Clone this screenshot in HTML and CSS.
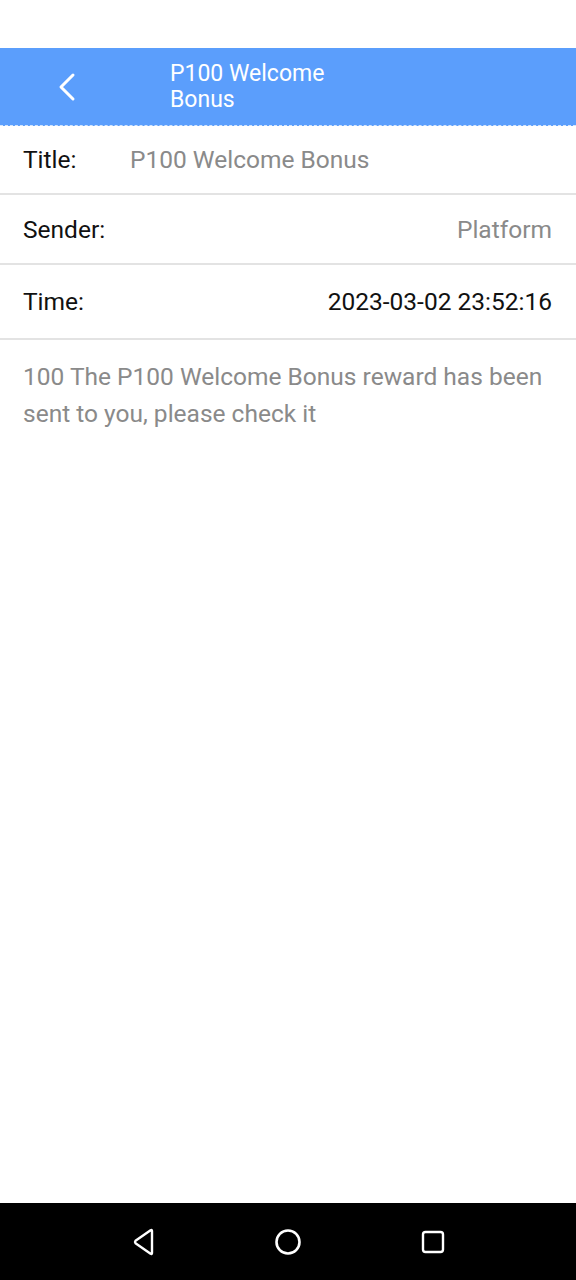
FILE: index.html
```html
<!DOCTYPE html>
<html lang="en">
<head>
    <meta charset="UTF-8">
    <meta name="viewport" content="width=device-width, initial-scale=1.0">
    <title>Message Detail</title>
    <link rel="stylesheet" href="styles.css">
</head>
<body>

<div class="screen">
    <div class="status-space"></div>

    <!-- Top bar -->
    <div class="topbar">
        <button class="back-btn" aria-label="Back">
            <svg width="22" height="32" viewBox="0 0 22 32">
                <path d="M17 4 L5 16 L17 28" fill="none" stroke="#fff" stroke-width="3" stroke-linecap="round" stroke-linejoin="round"/>
            </svg>
        </button>
        <div class="topbar-title">P100 Welcome Bonus</div>
    </div>

    <!-- Message info -->
    <div class="info-list">
        <div class="info-row">
            <span class="info-label title-label">Title:</span>
            <span class="info-value">P100 Welcome Bonus</span>
        </div>
        <div class="info-row right mid">
            <span class="info-label">Sender:</span>
            <span class="info-value">Platform</span>
        </div>
        <div class="info-row right tall">
            <span class="info-label">Time:</span>
            <span class="info-value dark">2023-03-02 23:52:16</span>
        </div>
    </div>

    <div class="message-body">
        100 The P100 Welcome Bonus reward has been sent to you, please check it
    </div>

    <!-- Android navigation bar -->
    <div class="navbar">
        <svg width="24" height="28" viewBox="0 0 24 28">
            <path d="M20 3 L20 25 Q20 26.5 18.6 25.7 L3.5 15.2 Q2.5 14 3.5 12.8 L18.6 2.3 Q20 1.5 20 3 Z" fill="none" stroke="#fff" stroke-width="2.4" stroke-linejoin="round"/>
        </svg>
        <svg width="28" height="28" viewBox="0 0 28 28">
            <circle cx="14" cy="14" r="11.5" fill="none" stroke="#fff" stroke-width="2.6"/>
        </svg>
        <svg width="26" height="26" viewBox="0 0 26 26">
            <rect x="3" y="3" width="20" height="20" rx="2.5" fill="none" stroke="#fff" stroke-width="2.4"/>
        </svg>
    </div>
</div>

</body>
</html>
```

FILE: styles.css
```css
body {
    margin: 0;
    font-family: Roboto, "Noto Sans", Arial, sans-serif;
    background-color: #fff;
}
.screen {
    display: flex;
    flex-direction: column;
    height: 1280px;
    width: 576px;
}
.status-space {
    height: 48px;
    background-color: #fff;
}
.topbar {
    height: 77px;
    background-color: #5b9efc;
    display: flex;
    align-items: center;
    border-bottom: 1px dashed #d6e6fb;
}
.back-btn {
    background: none;
    border: none;
    padding: 0;
    margin-left: 56px;
    width: 22px;
    height: 32px;
    display: flex;
    cursor: pointer;
}
.topbar-title {
    margin-left: 92px;
    width: 175px;
    color: #fff;
    font-size: 23px;
    line-height: 26px;
}
.info-row {
    box-sizing: border-box;
    display: flex;
    align-items: center;
    height: 69px;
    padding: 0 24px 0 23px;
    border-bottom: 2px solid #e3e3e3;
    font-size: 24.5px;
}
.info-row.mid {
    height: 70px;
}
.info-row.tall {
    height: 75px;
}
.info-row.right {
    justify-content: space-between;
}
.info-label {
    color: #111;
}
.title-label {
    width: 107px;
}
.info-value {
    color: #8a8a8a;
}
.info-value.dark {
    color: #111;
}
.message-body {
    flex: 1;
    padding: 18px 24px 0 23px;
    font-size: 24.5px;
    line-height: 37px;
    color: #8a8a8a;
}
.navbar {
    height: 77px;
    background-color: #000;
    display: flex;
    align-items: center;
    justify-content: center;
    gap: 118px;
    padding-left: 2px;
}
```
